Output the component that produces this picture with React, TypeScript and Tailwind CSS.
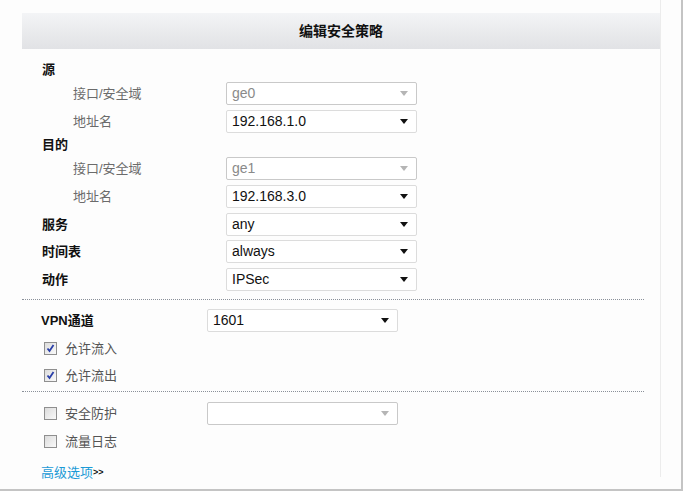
import React from 'react';

const font = { fontFamily: '"Liberation Sans", "Noto Sans CJK SC", sans-serif' };

function Select({ value, disabled, className }: { value: string; disabled?: boolean; className: string }) {
  return (
    <div
      className={`flex h-[23px] w-[191px] items-center justify-between rounded-[2px] border bg-white pl-[5px] pr-[8px] text-[14px] ${
        disabled ? 'border-[#c9c9c9] text-[#8a8a8a]' : 'border-[#dcdcdc] text-[#111]'
      } ${className}`}
    >
      <span>{value}</span>
      <svg width="8" height="5" viewBox="0 0 8 5">
        <path d="M0 0H8L4 5Z" fill={disabled ? '#b5b5b5' : '#111'} />
      </svg>
    </div>
  );
}

function Check({ checked }: { checked?: boolean }) {
  return (
    <span className="flex h-[13px] w-[13px] items-center justify-center border border-[#8f8f8f] bg-gradient-to-br from-[#dcdcdc] to-[#fafafa]">
      {checked && (
        <svg width="9" height="9" viewBox="0 0 9 9">
          <path d="M1.5 4.5L3.5 7L7.5 1" stroke="#2a3fa8" strokeWidth="1.8" fill="none" />
        </svg>
      )}
    </span>
  );
}

function Row({ label, sub, children, className = '' }: { label: string; sub?: boolean; children?: React.ReactNode; className?: string }) {
  return (
    <div className={`flex h-[23px] items-center ${className}`}>
      <div
        className={
          sub
            ? 'w-[184px] pl-[31px] text-[13px] text-[#6b6b6b]'
            : 'w-[184px] text-[13px] font-bold text-[#111]'
        }
      >
        {label}
      </div>
      {children}
    </div>
  );
}

function CheckRow({ label, checked, children, className = '' }: { label: string; checked?: boolean; children?: React.ReactNode; className?: string }) {
  return (
    <div className={`flex h-[23px] items-center ${className}`}>
      <div className="flex w-[166px] items-center pl-[3px]">
        <Check checked={checked} />
        <span className="ml-[8px] text-[13px] text-[#555]">{label}</span>
      </div>
      {children}
    </div>
  );
}

export default function App() {
  return (
    <div className="h-[491px] w-[683px] border-b-2 border-r-2 border-[#c4c4c4] bg-[#fdfdfd]" style={font}>
      <div className="ml-[22px] h-[477px] w-[639px] border-r border-[#ececec] pt-[13px]">
        <div className="flex h-[36px] items-center justify-center bg-gradient-to-b from-[#f3f4f6] to-[#e1e2e5] text-[14px] font-bold text-[#111]">
          编辑安全策略
        </div>
        <div className="pl-[20px] pt-[9px]">
          <div className="flex h-[24px] items-center text-[13px] font-bold text-[#111]">源</div>
          <Row label="接口/安全域" sub>
            <Select value="ge0" disabled className="" />
          </Row>
          <Row label="地址名" sub className="mt-[5px]">
            <Select value="192.168.1.0" className="" />
          </Row>
          <div className="flex h-[24px] items-center text-[13px] font-bold text-[#111]">目的</div>
          <Row label="接口/安全域" sub>
            <Select value="ge1" disabled className="" />
          </Row>
          <Row label="地址名" sub className="mt-[5px]">
            <Select value="192.168.3.0" className="" />
          </Row>
          <Row label="服务" className="mt-[5px]">
            <Select value="any" className="" />
          </Row>
          <Row label="时间表" className="mt-[4px]">
            <Select value="always" className="" />
          </Row>
          <Row label="动作" className="mt-[5px]">
            <Select value="IPSec" className="" />
          </Row>
        </div>
        <div className="mr-[16px] mt-[8px] border-t border-dotted border-[#8a9099]" />
        <div className="pl-[19px] pt-[9px]">
          <div className="flex h-[23px] items-center">
            <div className="w-[166px] text-[13px] font-bold text-[#111]">VPN通道</div>
            <Select value="1601" className="" />
          </div>
          <CheckRow label="允许流入" checked className="mt-[5px]" />
          <CheckRow label="允许流出" checked className="mt-[4px]" />
        </div>
        <div className="mr-[16px] mt-[4px] border-t border-dotted border-[#8a9099]" />
        <div className="pl-[19px] pt-[10px]">
          <CheckRow label="安全防护">
            <Select value="" disabled className="!border-[#c9c9c9]" />
          </CheckRow>
          <CheckRow label="流量日志" className="mt-[5px]" />
          <div className="mt-[8px] flex h-[23px] items-center text-[13px]">
            <span className="text-[#1b9ad6]">高级选项</span>
            <span className="text-[9px] font-bold text-[#111]">&gt;&gt;</span>
          </div>
        </div>
      </div>
    </div>
  );
}
